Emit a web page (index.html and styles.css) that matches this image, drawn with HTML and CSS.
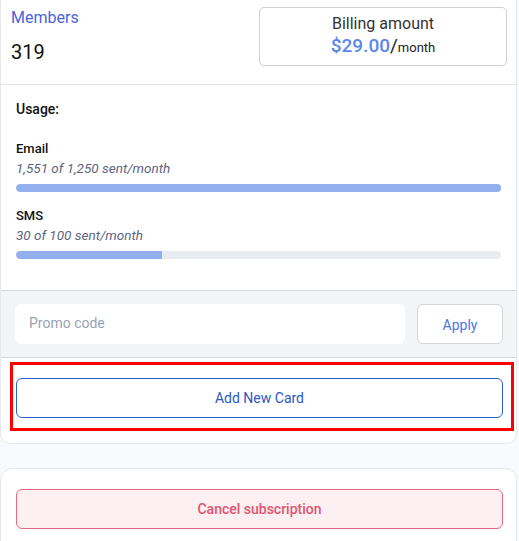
FILE: index.html
```html
<!DOCTYPE html>
<html>
<head>
<meta charset="utf-8">
<link rel="stylesheet" href="styles.css">
</head>
<body>
<div class="page">
  <div class="card plan-card">
    <div class="header">
      <div class="members">
        <div class="members-label">Members</div>
        <div class="members-count">319</div>
      </div>
      <div class="billing">
        <div class="billing-title">Billing amount</div>
        <div class="billing-price"><span class="price">$29.00</span>/<span class="per">month</span></div>
      </div>
    </div>
    <div class="usage">
      <div class="usage-title">Usage:</div>
      <div class="meter first">
        <div class="meter-label">Email</div>
        <div class="meter-sub">1,551 of 1,250 sent/month</div>
        <div class="bar"><div class="fill" style="width:100%"></div></div>
      </div>
      <div class="meter">
        <div class="meter-label">SMS</div>
        <div class="meter-sub">30 of 100 sent/month</div>
        <div class="bar"><div class="fill" style="width:30%"></div></div>
      </div>
    </div>
    <div class="promo">
      <input class="promo-input" type="text" placeholder="Promo code">
      <button class="apply-btn">Apply</button>
    </div>
    <div class="add-wrap">
      <button class="add-btn">Add New Card</button>
      <div class="highlight"></div>
    </div>
  </div>
  <div class="card cancel-card">
    <button class="cancel-btn">Cancel subscription</button>
  </div>
</div>
</body>
</html>
```

FILE: styles.css
```css
* { box-sizing: border-box; }
html, body { margin: 0; padding: 0; }
body {
  background: #f9fafd;
  font-family: Roboto, "Noto Sans", "Liberation Sans", sans-serif;
  color: #111;
  overflow: hidden;
}
.page {
  width: 517px;
  margin-top: -9px;
}
.card {
  background: #fff;
  border: 1px solid #e6e8ec;
  border-radius: 12px;
}
.plan-card {
  border-radius: 10px;
}
.header {
  display: flex;
  justify-content: space-between;
  align-items: flex-start;
  padding: 15px 9px 18px 10px;
  border-bottom: 1px solid #e3e5e9;
}
.members-label {
  font-size: 16px;
  line-height: 20px;
  color: #4b63db;
  margin-top: 1px;
}
.members-count {
  font-size: 20px;
  line-height: 24px;
  margin-top: 12px;
  color: #111;
  font-weight: 400;
}
.billing {
  width: 248px;
  height: 59px;
  border: 1px solid #cfd1d5;
  border-radius: 5px;
  text-align: center;
  padding-top: 6px;
  color: #333;
}
.billing-title {
  font-size: 16px;
  line-height: 20px;
}
.billing-price {
  font-size: 19px;
  line-height: 24px;
  color: #222;
}
.price {
  color: #5b86ee;
  font-weight: 500;
}
.per {
  font-size: 13px;
}
.usage {
  padding: 14px 15px 31px 15px;
  border-bottom: 1px solid #d5d7dc;
}
.usage-title {
  font-size: 14px;
  line-height: 20px;
  font-weight: 500;
}
.meter {
  margin-top: 15px;
}
.meter.first {
  margin-top: 21px;
}
.meter-label {
  font-size: 13px;
  line-height: 18px;
  font-weight: 500;
}
.meter-sub {
  font-size: 13.5px;
  line-height: 20px;
  font-style: italic;
  color: #5d6581;
}
.bar {
  margin-top: 6px;
  height: 8px;
  background: #e8ebf0;
  border-radius: 4px;
  overflow: hidden;
}
.fill {
  height: 100%;
  background: #93b0ee;
  border-radius: 4px 0 0 4px;
}
.promo {
  display: flex;
  gap: 12px;
  padding: 13px 13px 13px 14px;
  background: #f3f4f6;
  border-bottom: 1px solid #d5d7dc;
}
.promo-input {
  flex: 1;
  height: 40px;
  border: none;
  border-radius: 6px;
  background: #fff;
  padding: 0 14px 2px;
  font-family: inherit;
  font-size: 14px;
  color: #333;
  outline: none;
}
.promo-input::placeholder {
  color: #9aa2b6;
}
.apply-btn {
  width: 86px;
  height: 40px;
  background: #fff;
  border: 1px solid #d4d6da;
  border-radius: 6px;
  font-family: inherit;
  font-size: 14px;
  color: #4a76e6;
  padding: 1px 0 0;
}
.add-wrap {
  position: relative;
  padding: 20px 13px 25px 15px;
}
.add-btn {
  display: block;
  width: 100%;
  height: 40px;
  background: #fff;
  border: 1px solid #2a5fd0;
  border-radius: 6px;
  font-family: inherit;
  font-size: 14px;
  color: #2c56c4;
}
.highlight {
  position: absolute;
  left: 9px;
  top: 4px;
  width: 504px;
  height: 69px;
  border: 3px solid #ff0000;
  pointer-events: none;
}
.cancel-card {
  margin-top: 24px;
  padding: 20px 13px 40px 15px;
}
.cancel-btn {
  display: block;
  width: 100%;
  height: 40px;
  background: #fdf0f3;
  border: 1px solid #e26b86;
  border-radius: 6px;
  font-family: inherit;
  font-size: 14px;
  font-weight: 500;
  color: #e05470;
}
```
